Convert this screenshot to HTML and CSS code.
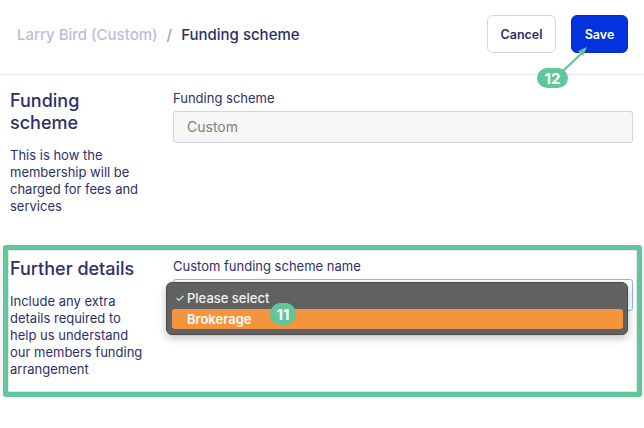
FILE: index.html
```html
<!DOCTYPE html>
<html lang="en">
<head>
<meta charset="utf-8">
<title>Funding scheme</title>
<link rel="stylesheet" href="styles.css">
</head>
<body>
<header class="topbar">
  <nav class="crumbs">
    <span class="crumb-muted">Larry Bird (Custom)</span>
    <span class="crumb-sep">/</span>
    <span class="crumb-current">Funding scheme</span>
  </nav>
  <div class="actions">
    <button class="btn btn-secondary" type="button">Cancel</button>
    <button class="btn btn-primary" type="button">Save</button>
  </div>
  <div class="step step-12">12</div>
  <svg class="arrow-12" width="40" height="40" viewBox="0 0 40 40">
    <line x1="6" y1="30" x2="27" y2="10" stroke="#5fc79a" stroke-width="2.2" stroke-linecap="round"/>
    <polygon points="31,5 22,9 27,14" fill="#5fc79a"/>
  </svg>
</header>

<main class="content">
  <section class="form-section section-first">
    <div class="section-info">
      <h2 class="section-title">Funding scheme</h2>
      <p class="section-desc">This is how the membership will be charged for fees and services</p>
    </div>
    <div class="section-fields">
      <label class="field-label">Funding scheme</label>
      <div class="input input-disabled">Custom</div>
    </div>
  </section>

  <section class="form-section section-highlight">
    <div class="section-info">
      <h2 class="section-title">Further details</h2>
      <p class="section-desc">Include any extra details required to help us understand our members funding arrangement</p>
    </div>
    <div class="section-fields">
      <label class="field-label">Custom funding scheme name</label>
      <div class="select-wrap">
        <div class="input input-focus"></div>
        <ul class="menu">
          <li class="menu-item"><span class="check">✓</span>Please select</li>
          <li class="menu-item menu-item-active">Brokerage</li>
        </ul>
        <div class="step step-11">11</div>
      </div>
    </div>
  </section>
</main>
</body>
</html>
```

FILE: styles.css
```css
* { box-sizing: border-box; }

html, body {
  margin: 0;
  padding: 0;
  background: #ffffff;
  font-family: "Inter", "Open Sans", "Liberation Sans", sans-serif;
  color: #2d2f6b;
}

.topbar {
  position: relative;
  height: 75px;
  display: flex;
  align-items: flex-start;
  justify-content: space-between;
  padding: 15px 16px 0 17px;
  border-bottom: 1px solid #ececf2;
  box-shadow: 0 1px 2px rgba(30, 30, 80, 0.03);
}

.crumbs {
  display: flex;
  gap: 9px;
  padding-top: 1px;
  font-size: 15px;
  font-weight: 500;
  line-height: 38px;
}

.crumb-muted { color: #bcbdd6; }
.crumb-sep { color: #9fa0ba; }
.crumb-current { color: #2d2f6b; }

.actions {
  display: flex;
  gap: 15px;
}

.btn {
  height: 38px;
  border-radius: 6px;
  font-family: inherit;
  font-size: 12.5px;
  font-weight: 600;
  padding: 0;
  cursor: pointer;
}

.btn-secondary {
  width: 69px;
  background: #ffffff;
  color: #2d2f6b;
  border: 1px solid #d4d4e4;
}

.btn-primary {
  width: 57px;
  background: #0532df;
  color: #ffffff;
  border: 1px solid #0a2ac0;
}

.step {
  position: absolute;
  background: #5fc79a;
  color: #ffffff;
  font-weight: 700;
  font-size: 15px;
  display: flex;
  align-items: center;
  justify-content: center;
  border-radius: 11px;
  z-index: 3;
}

.step-12 {
  left: 537px;
  top: 68px;
  width: 31px;
  height: 20px;
}

.arrow-12 {
  position: absolute;
  left: 556px;
  top: 42px;
  z-index: 3;
}

.content {
  padding: 0 11px 0 10px;
}

.form-section {
  display: grid;
  grid-template-columns: 163px 1fr;
}

.section-first {
  padding: 15px 0 25px;
}

.section-highlight {
  margin: 5px -9px 0 -7px;
  border: 5px solid #5fc79a;
  border-radius: 3px;
  padding: 8px 4px 14px 2px;
  box-shadow: inset 0 0 0 1px #e4e4e4, 0 2px 6px rgba(0, 0, 0, 0.12);
}

.section-info {
  padding-right: 28px;
}

.section-title {
  margin: 0 0 13px;
  font-size: 18px;
  line-height: 22px;
  font-weight: 500;
  color: #2d2f6b;
}

.section-desc {
  margin: 0;
  font-size: 13px;
  line-height: 17px;
  color: #2d2f6b;
}

.field-label {
  display: block;
  font-size: 13px;
  line-height: 17px;
  margin-bottom: 4px;
  color: #2d2f6b;
}

.input {
  height: 32px;
  border-radius: 3px;
  font-size: 14px;
  line-height: 30px;
  padding: 0 13px;
}

.input-disabled {
  background: #f6f6f7;
  border: 1px solid #d3d3e2;
  color: #808080;
}

.input-focus {
  background: #ffffff;
  border: 1px solid #8fb8ee;
}

.select-wrap {
  position: relative;
}

.menu {
  position: absolute;
  left: -7px;
  top: 3px;
  width: 462px;
  margin: 0;
  padding: 5px 4px 5px 5px;
  list-style: none;
  background: #616161;
  border: 1px solid #4a4a4a;
  border-radius: 6px;
  box-shadow: 0 3px 8px rgba(0, 0, 0, 0.25);
  z-index: 2;
}

.menu-item {
  height: 20px;
  line-height: 20px;
  padding-left: 15px;
  font-size: 13px;
  font-weight: 500;
  color: #f2f2f2;
  position: relative;
}

.menu-item + .menu-item {
  margin-top: 1px;
}

.check {
  position: absolute;
  left: 3px;
  font-size: 11px;
  font-weight: 400;
}

.menu-item-active {
  background: #f5943d;
  border-radius: 3px;
  color: #ffffff;
  font-weight: 600;
}

.step-11 {
  left: 97px;
  top: 24px;
  width: 26px;
  height: 22px;
}
```
